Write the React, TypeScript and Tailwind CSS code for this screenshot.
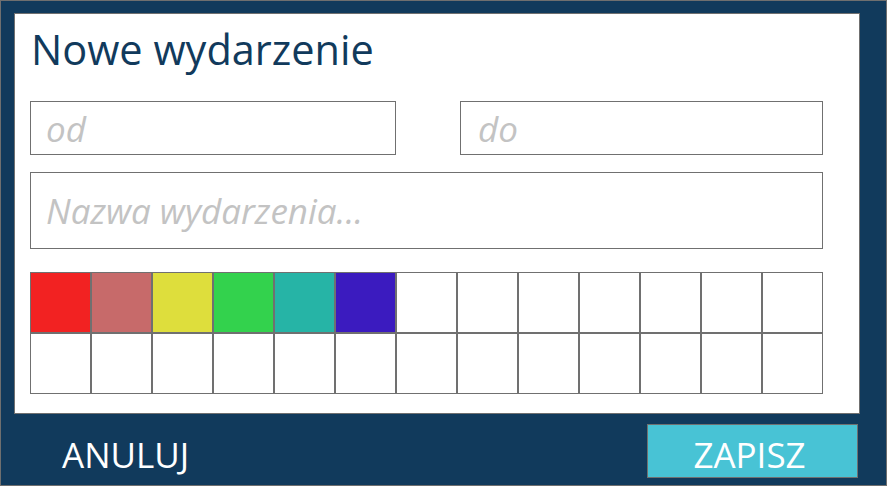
const colors = [
  "#f22222",
  "#c76a6a",
  "#dede3c",
  "#33d24d",
  "#26b4a6",
  "#3b1bbf",
];

const cells = Array.from({ length: 26 }, (_, i) => colors[i] ?? "#ffffff");

export default function App() {
  return (
    <div className="w-[887px] h-[486px] bg-[#113a5c] border border-[#6f6f6f] flex flex-col font-['Open_Sans',sans-serif] overflow-hidden">
      {/* Dialog body */}
      <div className="ml-[13px] mt-[12px] w-[846px] h-[401px] bg-white border border-[#707070] px-[15px] flex flex-col">
        <h1 className="text-[41.5px] leading-[48px] mt-[11px] ml-px text-[#113a5c] font-normal">
          Nowe wydarzenie
        </h1>

        <div className="flex gap-[64px] mt-[28px]">
          <input
            placeholder="od"
            className="w-[366px] h-[54px] border border-[#707070] px-[15px] text-[35px] italic text-[#333] placeholder:text-[#c3c3c3] outline-none"
          />
          <input
            placeholder="do"
            className="w-[363px] h-[54px] border border-[#707070] px-[17px] text-[35px] italic text-[#333] placeholder:text-[#c3c3c3] outline-none"
          />
        </div>

        <input
          placeholder="Nazwa wydarzenia..."
          className="mt-[17px] w-[793px] h-[77px] border border-[#707070] px-[15px] text-[35px] italic text-[#333] placeholder:text-[#c3c3c3] outline-none"
        />

        {/* Colour picker */}
        <div className="mt-[23px] grid grid-cols-[repeat(13,61px)] grid-rows-[61px_61px] w-[793px]">
          {cells.map((c, i) => (
            <div
              key={i}
              className="border border-[#707070]"
              style={{ backgroundColor: c }}
            />
          ))}
        </div>
      </div>

      {/* Actions */}
      <div className="flex items-center justify-between pl-[61px] pr-[28px] mt-[10px]">
        <button className="text-white text-[35px] leading-none pt-[6px]">
          ANULUJ
        </button>
        <button className="w-[211px] h-[54px] bg-[#48c3d5] border border-[#707070] text-white text-[35px] leading-none pt-[6px] pr-[6px]">
          ZAPISZ
        </button>
      </div>
    </div>
  );
}
